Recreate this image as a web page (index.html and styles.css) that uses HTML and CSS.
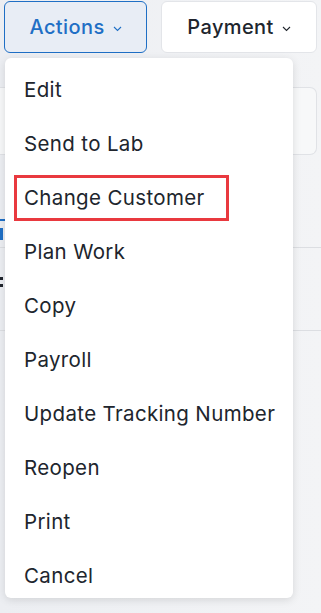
FILE: index.html
```html
<!DOCTYPE html>
<html lang="en">
    <head>
        <meta charset="UTF-8" />
        <meta name="viewport" content="width=device-width, initial-scale=1.0" />
        <title>Actions menu</title>
        <link rel="stylesheet" href="styles.css">
    </head>
    <body>
        <!-- 상단 버튼줄 -->
        <div class="toolbar">
            <button class="btn btn-actions">Actions
                <svg class="chev" width="9" height="6" viewBox="0 0 9 6"><path d="M1 1l3.5 3.5L8 1" fill="none" stroke="currentColor" stroke-width="1.1"/></svg>
            </button>
            <button class="btn btn-pay">Payment
                <svg class="chev" width="9" height="6" viewBox="0 0 9 6"><path d="M1 1l3.5 3.5L8 1" fill="none" stroke="currentColor" stroke-width="1.1"/></svg>
            </button>
        </div>

        <!-- 뒤쪽 페이지 내용 (메뉴에 가려짐) -->
        <div class="page">
            <div class="card"></div>
            <div class="tab"><i class="tab-line"></i><i class="tab-glyph"></i></div>
            <div class="rule"></div>
            <div class="field"><i class="dot"></i><i class="dot"></i></div>
            <div class="rule"></div>
        </div>

        <!-- 드롭다운 메뉴 -->
        <ul class="menu">
            <li>Edit</li>
            <li>Send to Lab</li>
            <li class="marked"><span>Change Customer</span></li>
            <li>Plan Work</li>
            <li>Copy</li>
            <li>Payroll</li>
            <li>Update Tracking Number</li>
            <li>Reopen</li>
            <li>Print</li>
            <li>Cancel</li>
        </ul>
    </body>
</html>
```

FILE: styles.css
```css
:root {
    --blue: #1f6fc5;
    --ink: #20252d;
}

body {
    margin: 0;
    width: 321px;
    height: 613px;
    overflow: hidden;
    position: relative;
    background: linear-gradient(90deg, #eceef2, #f3f4f6);
    font-family: Inter, "Noto Sans", sans-serif;
    color: var(--ink);
}

/* 버튼줄 */
.toolbar {
    display: flex;
    gap: 14px;
    padding: 1px 4px 0;
}
.btn {
    display: flex;
    align-items: center;
    justify-content: center;
    gap: 8px;
    height: 52px;
    border-radius: 6px;
    font-family: inherit;
    font-size: 20px;
    font-weight: 500;
    letter-spacing: 0.4px;
    padding: 0;
}
.btn-actions {
    width: 144px;
    color: var(--blue);
    background: #e8edf5;
    border: 1px solid var(--blue);
}
.btn-pay {
    width: 157px;
    color: var(--ink);
    background: #fff;
    border: 1px solid #e3e5e9;
}
.chev {
    margin-top: 4px;
}

/* 뒤쪽 내용 */
.page {
    display: flex;
    flex-direction: column;
}
.card {
    margin: 34px 4px 0 0;
    height: 66px;
    background: #f7f8f9;
    border: 1px solid #e0e2e6;
    border-left: 0;
    border-radius: 0 7px 7px 0;
}
.tab {
    position: relative;
    margin-top: 64px;
    height: 28px;
}
.tab-line {
    display: block;
    width: 10px;
    height: 2px;
    background: var(--blue);
}
.tab-glyph {
    display: block;
    margin-top: 7px;
    width: 3px;
    height: 12px;
    background: var(--blue);
}
.rule {
    height: 1px;
    background: #dcdee2;
}
.field {
    display: flex;
    flex-direction: column;
    gap: 4px;
    height: 51px;
    padding-top: 29px;
    box-sizing: border-box;
}
.dot {
    display: block;
    width: 3px;
    height: 3px;
    background: var(--ink);
}
.field + .rule {
    margin-top: 31px;
}

/* 드롭다운 메뉴 (위에 떠있음) */
.menu {
    position: absolute;
    top: 58px;
    left: 5px;
    width: 288px;
    height: 535px;
    margin: 0;
    padding: 5px 0 0;
    list-style: none;
    background: #fff;
    border-radius: 6px;
    box-shadow: 0 2px 8px rgba(0, 0, 0, 0.12);
}
.menu li {
    height: 54px;
    line-height: 54px;
    padding-left: 19px;
    font-size: 20.5px;
    letter-spacing: 0.35px;
    white-space: nowrap;
}
.menu li.marked span {
    display: inline-block;
    margin-left: -10px;
    padding: 0 21px 0 7px;
    line-height: 40px;
    border: 3px solid #e9393f;
}
```
